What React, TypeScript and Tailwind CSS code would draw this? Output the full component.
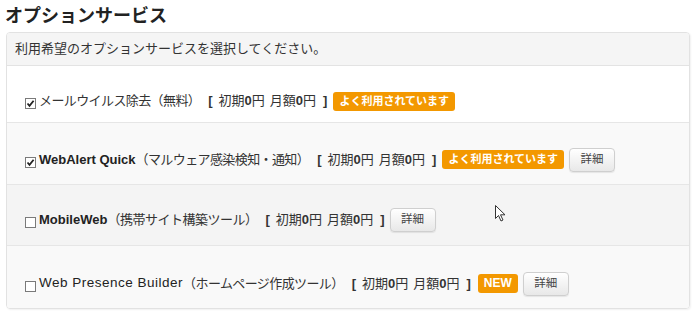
import React from "react";

const font = { fontFamily: '"Liberation Sans", "Noto Sans CJK JP", sans-serif' };

function Check({ checked }: { checked: boolean }) {
  return (
    <svg width="11" height="11" viewBox="0 0 11 11" className="mr-[3px] mt-[5px] shrink-0">
      <rect x="0.5" y="0.5" width="10" height="10" fill="#fff" stroke="#7a7a7a" />
      {checked && <path d="M2.5 5.5 L4.5 7.8 L8.6 2.8" fill="none" stroke="#222" strokeWidth="1.8" />}
    </svg>
  );
}

function Price() {
  return (
    <span className="ml-[8px] whitespace-nowrap text-[#333] flex items-center">
      <b>[</b>
      <span className="ml-[6px]">初期<b>0</b>円</span>
      <span className="ml-[5px]">月額<b>0</b>円</span>
      <b className="ml-[7px]">]</b>
    </span>
  );
}

function Popular() {
  return (
    <span className="ml-[6px] rounded-[3px] bg-[#f39800] px-[6px] h-[19px] leading-[19px] text-[11px] font-bold text-white whitespace-nowrap">
      よく利用されています
    </span>
  );
}

function NewBadge() {
  return (
    <span className="ml-[7px] rounded-[3px] bg-[#f39800] px-[6px] h-[19px] leading-[19px] text-[12px] font-bold text-white">
      NEW
    </span>
  );
}

function Detail() {
  return (
    <button className="ml-[5px] h-[24px] w-[46px] rounded-[4px] border border-[#cfcfcf] bg-gradient-to-b from-white to-[#e8e8e8] text-[11.5px] text-[#444] shadow-[0_1px_1px_rgba(0,0,0,0.08)]">
      詳細
    </button>
  );
}

export default function App() {
  return (
    <div className="w-[700px] h-[314px] bg-white text-[13px] text-[#333] relative" style={font}>
      <h2 className="pl-[5px] pt-[4px] text-[18px] font-bold leading-[24px] text-[#222]">オプションサービス</h2>
      <div className="ml-[6px] mt-[4px] w-[684px] rounded-[4px] border border-[#e2e2e2] shadow-[1px_1px_2px_rgba(0,0,0,0.06)] overflow-hidden">
        <div className="h-[33px] bg-[#f5f5f5] border-b border-[#e3e3e3] pl-[8px] flex items-center">
          利用希望のオプションサービスを選択してください。
        </div>
        <div className="h-[57px] bg-white border-b border-[#e6e6e6] pl-[18px] pt-[25px] flex items-start">
          <div className="flex items-center h-[20px]">
            <Check checked />
            <span className="tracking-[-0.6px]">メールウイルス除去（無料）</span>
            <Price />
            <Popular />
          </div>
        </div>
        <div className="h-[62px] bg-[#f9f9f9] border-b border-[#e6e6e6] pl-[18px] pt-[24px] flex items-start">
          <div className="flex items-center h-[25px]">
            <Check checked />
            <b className="text-[#222]">WebAlert Quick</b>
            <span className="tracking-[-0.6px]">（マルウェア感染検知・通知）</span>
            <Price />
            <Popular />
            <Detail />
          </div>
        </div>
        <div className="h-[61px] bg-[#f4f4f4] border-b border-[#e6e6e6] pl-[18px] pt-[22px] flex items-start">
          <div className="flex items-center h-[25px]">
            <Check checked={false} />
            <b className="text-[#222]">MobileWeb</b>
            <span className="tracking-[-0.5px]">（携帯サイト構築ツール）</span>
            <Price />
            <Detail />
          </div>
        </div>
        <div className="h-[62px] bg-[#f9f9f9] pl-[18px] pt-[25px] flex items-start">
          <div className="flex items-center h-[25px]">
            <Check checked={false} />
            <span className="text-[#222] text-[13.5px] tracking-[0.5px]">Web Presence Builder</span>
            <span className="tracking-[-0.6px]">（ホームページ作成ツール）</span>
            <Price />
            <NewBadge />
            <Detail />
          </div>
        </div>
      </div>
      <svg className="absolute left-[495px] top-[205px]" width="12" height="18" viewBox="0 0 12 18">
        <path d="M0.5 0.5 L0.5 13.5 L3.5 10.5 L6 16 L8 15 L5.5 9.8 L10 9.8 Z" fill="#fff" stroke="#333" strokeWidth="1" />
      </svg>
    </div>
  );
}
